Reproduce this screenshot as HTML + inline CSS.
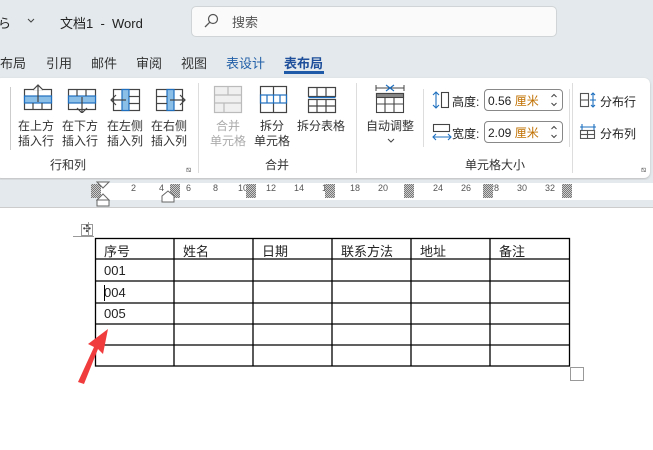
<!DOCTYPE html>
<html><head><meta charset="utf-8"><style>
*{margin:0;padding:0;box-sizing:border-box}
body{width:653px;height:450px;overflow:hidden;background:#fff;font-family:"Liberation Sans","Noto Sans CJK SC",sans-serif;color:#222;position:relative}
.a{position:absolute;white-space:nowrap}
.t{font-size:12px}
.lbl{font-size:12px;color:#333;text-align:center;line-height:15px}
.rm{position:absolute;top:184px;width:10px;height:14px;background:repeating-conic-gradient(#777 0 25%,#ccc 0 50%) 0 0/2px 2px}
</style></head><body>
<div class="a" style="left:0;top:0;width:653px;height:180px;background:#e3e9ec"></div>
<div class="a t" style="left:-2px;top:13px;font-size:13px">ら</div>
<svg class="a" style="left:27px;top:18px" width="8" height="6"><path d="M1 1l3 3 3-3" fill="none" stroke="#444"/></svg>
<div class="a" style="left:60px;top:13px;font-size:13px;color:#222">文档1 &nbsp;- &nbsp;Word</div>
<div class="a" style="left:191px;top:6px;width:366px;height:31px;background:#fafafa;border:1px solid #d0d4d6;border-radius:5px"></div>
<svg class="a" style="left:203px;top:13px" width="16" height="16"><circle cx="10" cy="6" r="4.5" fill="none" stroke="#555" stroke-width="1.2"/><line x1="6.8" y1="9.2" x2="2" y2="14" stroke="#555" stroke-width="1.3"/></svg>
<div class="a" style="left:232px;top:12px;font-size:13px;color:#555">搜索</div>
<div class="a" style="left:0;top:53px;font-size:13px;color:#333">布局</div>
<div class="a" style="left:46px;top:53px;font-size:13px;color:#333">引用</div>
<div class="a" style="left:91px;top:53px;font-size:13px;color:#333">邮件</div>
<div class="a" style="left:136px;top:53px;font-size:13px;color:#333">审阅</div>
<div class="a" style="left:181px;top:53px;font-size:13px;color:#333">视图</div>
<div class="a" style="left:226px;top:53px;font-size:13px;color:#2360a8">表设计</div>
<div class="a" style="left:284px;top:53px;font-size:13px;color:#1f4f9a;font-weight:bold">表布局</div>
<div class="a" style="left:284px;top:71px;width:40px;height:3px;background:#1f5aa8"></div>
<div class="a" style="left:-5px;top:78px;width:655px;height:100px;background:#fff;border-radius:6px;box-shadow:0 1px 2px #bbb"></div>
<div class="a" style="left:10px;top:87px;width:1px;height:63px;background:#ccc"></div>
<div class="a" style="left:198px;top:83px;width:1px;height:90px;background:#ddd"></div>
<div class="a" style="left:356px;top:83px;width:1px;height:90px;background:#ddd"></div>
<div class="a" style="left:572px;top:83px;width:1px;height:90px;background:#ddd"></div>
<div class="a" style="left:423px;top:89px;width:1px;height:58px;background:#ddd"></div>
<div class="a" style="left:569px;top:89px;width:1px;height:58px;background:#ddd"></div>
<svg class="a" style="left:22px;top:83px" width="180" height="30" fill="none" stroke="#444" stroke-width="1.2">
<rect x="2.5" y="6.5" width="27" height="20"/><rect x="2.5" y="13" width="27" height="7" fill="#8cbfe8" stroke="#1e6fbf"/><line x1="11" y1="20" x2="11" y2="26.5"/><line x1="20" y1="20" x2="20" y2="26.5"/><path d="M16 19V2M11 7l5-5 5 5" stroke="#444" fill="#fff"/>
<g transform="translate(44 0)"><rect x="2.5" y="6.5" width="27" height="20"/><rect x="2.5" y="13" width="27" height="7" fill="#8cbfe8" stroke="#1e6fbf"/><line x1="11" y1="6.5" x2="11" y2="13"/><line x1="20" y1="6.5" x2="20" y2="13"/><path d="M16 14v16M11 25l5 5 5-5"/></g>
<g transform="translate(88 0)"><rect x="3.5" y="6.5" width="26" height="21"/><rect x="12" y="6.5" width="7" height="21" fill="#8cbfe8" stroke="#1e6fbf"/><line x1="19" y1="13.5" x2="29.5" y2="13.5"/><line x1="19" y1="20.5" x2="29.5" y2="20.5"/><path d="M16 17H1M6 12l-5 5 5 5"/></g>
<g transform="translate(132 0)"><rect x="2.5" y="6.5" width="26" height="21"/><rect x="13" y="6.5" width="7" height="21" fill="#8cbfe8" stroke="#1e6fbf"/><line x1="2.5" y1="13.5" x2="13" y2="13.5"/><line x1="2.5" y1="20.5" x2="13" y2="20.5"/><path d="M16 17h15M26 12l5 5-5 5"/></g>
</svg>
<div class="a lbl" style="left:18px;top:119px">在上方<br>插入行</div>
<div class="a lbl" style="left:62px;top:119px">在下方<br>插入行</div>
<div class="a lbl" style="left:107px;top:119px">在左侧<br>插入列</div>
<div class="a lbl" style="left:151px;top:119px">在右侧<br>插入列</div>
<div class="a lbl" style="left:50px;top:158px">行和列</div>
<div class="a" style="left:186px;top:165px;font-size:8px;color:#555">⧅</div>
<svg class="a" style="left:212px;top:84px" width="130" height="30" fill="none" stroke="#444" stroke-width="1.2">
<g stroke="#bbb"><rect x="2.5" y="2.5" width="27" height="26" fill="#f0f0f0"/><line x1="2.5" y1="11" x2="29.5" y2="11"/><line x1="2.5" y1="19" x2="29.5" y2="19"/><line x1="16" y1="2.5" x2="16" y2="11"/><line x1="12" y1="19" x2="12" y2="28.5"/></g>
<g transform="translate(46 0)"><rect x="2.5" y="2.5" width="26" height="26"/><line x1="15.5" y1="2.5" x2="15.5" y2="11"/><line x1="15.5" y1="19" x2="15.5" y2="28.5"/><rect x="2.5" y="11" width="26" height="8" stroke="#1e6fbf"/><line x1="9" y1="11" x2="9" y2="19" stroke="#1e6fbf"/><line x1="15.5" y1="11" x2="15.5" y2="19" stroke="#1e6fbf"/><line x1="22" y1="11" x2="22" y2="19" stroke="#1e6fbf"/></g>
<g transform="translate(94 0)"><rect x="2.5" y="3.5" width="27" height="9"/><rect x="2.5" y="15.5" width="27" height="13"/><line x1="2.5" y1="13.5" x2="29.5" y2="13.5" stroke="#1e6fbf"/><line x1="11" y1="3.5" x2="11" y2="12.5"/><line x1="20" y1="3.5" x2="20" y2="12.5"/><line x1="11" y1="15.5" x2="11" y2="28.5"/><line x1="20" y1="15.5" x2="20" y2="28.5"/><line x1="2.5" y1="22" x2="29.5" y2="22"/></g>
</svg>
<div class="a lbl" style="left:210px;top:119px;color:#aaa">合并<br>单元格</div>
<div class="a lbl" style="left:254px;top:119px">拆分<br>单元格</div>
<div class="a lbl" style="left:297px;top:119px">拆分表格</div>
<div class="a lbl" style="left:265px;top:158px">合并</div>
<svg class="a" style="left:374px;top:84px" width="32" height="30" fill="none" stroke="#444" stroke-width="1.1">
<path d="M2 1v6M30 1v6M2 4h28" stroke-width="1"/><path d="M12 1l8 6M20 1l-8 6" stroke="#1e6fbf"/>
<rect x="2.5" y="9.5" width="27" height="19"/><rect x="2.5" y="9.5" width="27" height="4" fill="#888"/><line x1="2.5" y1="20" x2="29.5" y2="20"/><line x1="11" y1="13" x2="11" y2="28.5"/><line x1="20" y1="13" x2="20" y2="28.5"/></svg>
<div class="a lbl" style="left:366px;top:119px">自动调整</div>
<svg class="a" style="left:387px;top:138px" width="8" height="6"><path d="M1 1l3 3 3-3" fill="none" stroke="#444"/></svg>
<svg class="a" style="left:432px;top:91px" width="20" height="18" fill="none" stroke-width="1.1"><path d="M4 1v16M1 4l3-3 3 3M1 14l3 3 3-3" stroke="#1e6fbf"/><rect x="9.5" y="1.5" width="7" height="15" stroke="#444"/></svg>
<div class="a t" style="left:452px;top:93px;font-size:12px">高度:</div>
<div class="a" style="left:484px;top:89px;width:79px;height:22px;border:1px solid #888;border-radius:4px;font-size:12px;padding:2px 0 0 3px">0.56 <span style="color:#c07000">厘米</span></div>
<svg class="a" style="left:550px;top:93px" width="8" height="14" fill="none" stroke="#444"><path d="M1.5 4l2.5-2.5 2.5 2.5M1.5 10l2.5 2.5 2.5-2.5"/></svg>
<svg class="a" style="left:432px;top:123px" width="20" height="18" fill="none" stroke-width="1.1"><rect x="1.5" y="1.5" width="16" height="7" stroke="#444"/><path d="M1 14h18M4 11l-3 3 3 3M16 11l3 3-3 3" stroke="#1e6fbf"/></svg>
<div class="a t" style="left:452px;top:125px;font-size:12px">宽度:</div>
<div class="a" style="left:484px;top:121px;width:79px;height:22px;border:1px solid #888;border-radius:4px;font-size:12px;padding:2px 0 0 3px">2.09 <span style="color:#c07000">厘米</span></div>
<svg class="a" style="left:550px;top:125px" width="8" height="14" fill="none" stroke="#444"><path d="M1.5 4l2.5-2.5 2.5 2.5M1.5 10l2.5 2.5 2.5-2.5"/></svg>
<div class="a lbl" style="left:465px;top:158px">单元格大小</div>
<div class="a" style="left:641px;top:165px;font-size:8px;color:#555">⧅</div>
<svg class="a" style="left:579px;top:92px" width="18" height="16" fill="none" stroke-width="1.1"><rect x="1.5" y="1.5" width="8" height="13" stroke="#555"/><line x1="1.5" y1="8" x2="9.5" y2="8" stroke="#555"/><path d="M14 1v14M12 3l2-2 2 2M12 13l2 2 2-2M11 8h6" stroke="#1e6fbf"/></svg>
<div class="a t" style="left:600px;top:93px">分布行</div>
<svg class="a" style="left:579px;top:123px" width="18" height="16" fill="none" stroke-width="1.1"><path d="M1 4h16M3 1v6M15 1v6" stroke="#1e6fbf"/><rect x="1.5" y="7.5" width="14" height="8" stroke="#555"/><line x1="8.5" y1="7.5" x2="8.5" y2="15.5" stroke="#555"/><line x1="1.5" y1="11.5" x2="15.5" y2="11.5" stroke="#555"/></svg>
<div class="a t" style="left:600px;top:125px">分布列</div>
<div class="a" style="left:0;top:180px;width:653px;height:28px;background:#e3e9ec;border-bottom:1px solid #ccc"></div>
<div class="a" style="left:100px;top:183px;width:557px;height:17px;background:#fff"></div>
<div class="a" style="left:0;top:183px;width:653px;font-size:9px;color:#555">
<span class="a" style="left:131px">2</span><span class="a" style="left:159px">4</span><span class="a" style="left:186px">6</span><span class="a" style="left:213px">8</span><span class="a" style="left:238px">10</span><span class="a" style="left:266px">12</span><span class="a" style="left:294px">14</span><span class="a" style="left:322px">1</span><span class="a" style="left:350px">18</span><span class="a" style="left:378px">20</span><span class="a" style="left:433px">24</span><span class="a" style="left:461px">26</span><span class="a" style="left:489px">28</span><span class="a" style="left:517px">30</span><span class="a" style="left:545px">32</span></div>
<div class="rm" style="left:91px"></div>
<div class="rm" style="left:170px"></div>
<div class="rm" style="left:246px"></div>
<div class="rm" style="left:325px"></div>
<div class="rm" style="left:404px"></div>
<div class="rm" style="left:483px"></div>
<div class="rm" style="left:562px"></div>
<svg class="a" style="left:96px;top:181px" width="90" height="30" fill="#fff" stroke="#666"><path d="M1 1h12l-6 6z"/><path d="M7 13l6 6H1z"/><rect x="1" y="19" width="12" height="6"/><path d="M66 21v-6l6-5 6 5v6z"/></svg>
<div class="a" style="left:88px;top:222px;width:1px;height:14px;background:#999"></div>
<div class="a" style="left:73px;top:236px;width:21px;height:1px;background:#999"></div>
<div class="a" style="left:81px;top:224px;width:12px;height:12px;border:1px solid #999;font-size:10px;line-height:10px;text-align:center;color:#444">✣</div>
<svg class="a" style="left:94px;top:237px" width="478" height="131">
<g stroke="#000" stroke-width="1.3" fill="none"><rect x="1.5" y="1.5" width="474" height="127.5"/>
<path d="M1 22h475M1 44h475M1 66h475M1 87h475M1 108h475M80 1v128M159 1v128M238 1v128M317 1v128M396 1v128"/></g></svg>
<div class="a" style="left:104px;top:241px;font-size:13px">序号</div>
<div class="a" style="left:183px;top:241px;font-size:13px">姓名</div>
<div class="a" style="left:262px;top:241px;font-size:13px">日期</div>
<div class="a" style="left:341px;top:241px;font-size:13px">联系方法</div>
<div class="a" style="left:420px;top:241px;font-size:13px">地址</div>
<div class="a" style="left:499px;top:241px;font-size:13px">备注</div>
<div class="a" style="left:104px;top:263px;font-size:13px">001</div>
<div class="a" style="left:104px;top:285px;font-size:13px">004</div>
<div class="a" style="left:104px;top:285px;width:1px;height:16px;background:#000"></div>
<div class="a" style="left:104px;top:306px;font-size:13px">005</div>
<div class="a" style="left:570px;top:367px;width:14px;height:14px;border:1px solid #999"></div>
<svg class="a" style="left:74px;top:326px" width="40" height="60"><path d="M34 3L14 18l6 3L4 56l6 2L24 23l5 5z" fill="#f03c3c"/></svg>
</body></html>
